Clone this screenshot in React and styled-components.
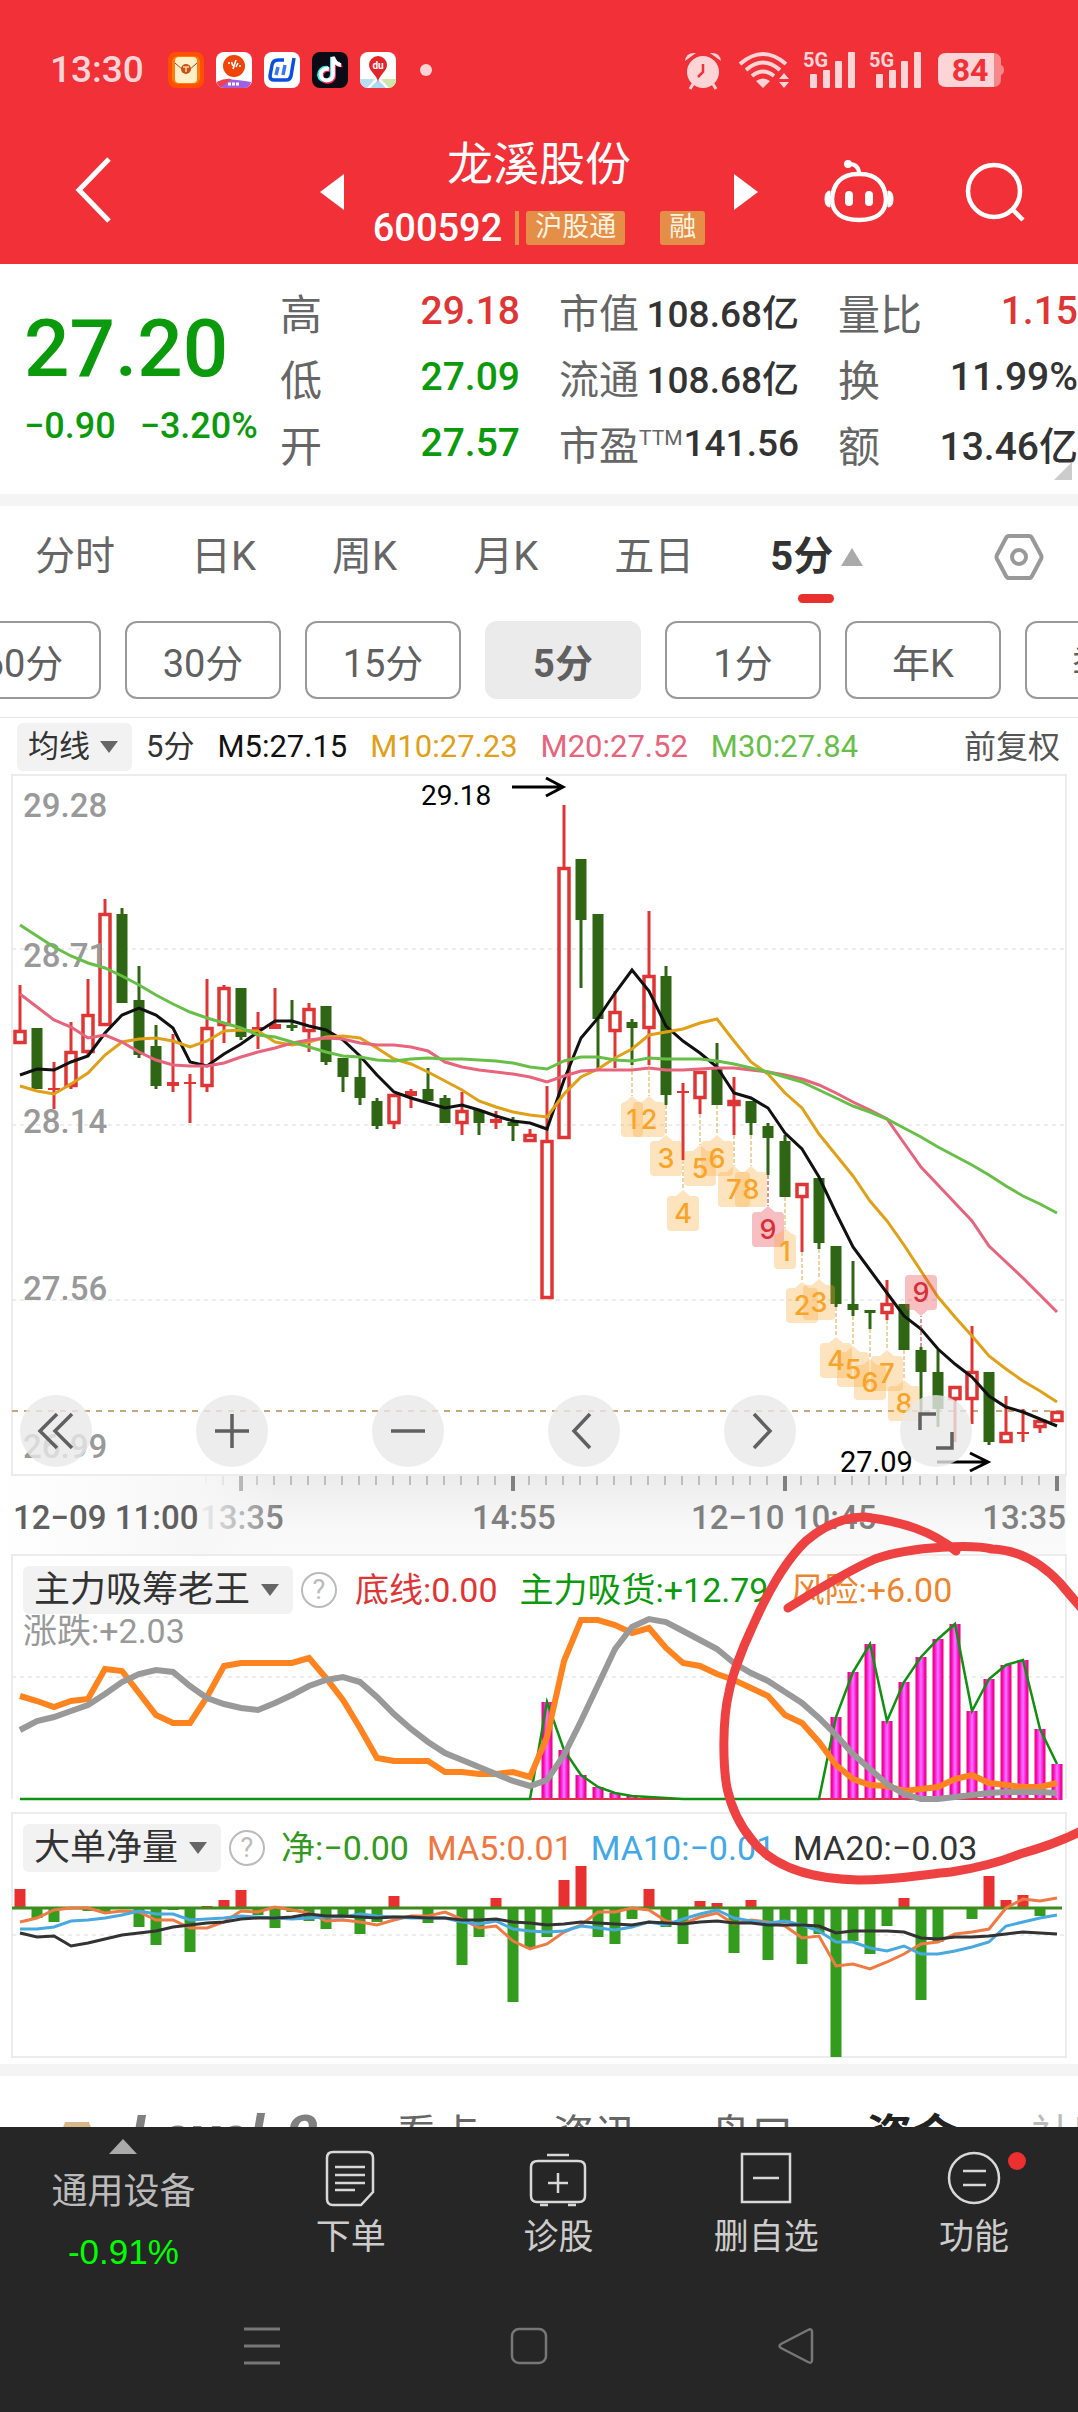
import { useState } from "react";
import styled, { createGlobalStyle } from "styled-components";

const RED = "#e03535";
const GREEN = "#0b9a0b";

// candles: [up, high, bodyTop, bodyBottom, low]
const candles = [
  [1, 215, 260, 274, 274], [0, 258, 258, 319, 319], [1, 292, 318, 320, 339], [1, 252, 281, 317, 319],
  [1, 209, 244, 283, 285], [1, 129, 143, 256, 256], [0, 138, 144, 233, 233], [0, 196, 230, 285, 288],
  [0, 255, 276, 316, 319], [1, 264, 312, 316, 322], [1, 304, 312, 314, 353], [1, 209, 257, 317, 322],
  [1, 215, 217, 256, 273], [0, 218, 218, 267, 270], [1, 242, 257, 260, 279], [1, 218, 254, 259, 259],
  [0, 230, 255, 258, 261], [1, 233, 238, 262, 282], [0, 236, 236, 292, 295], [0, 288, 288, 307, 322],
  [0, 288, 307, 328, 335], [0, 328, 331, 356, 359], [1, 324, 324, 354, 359], [1, 319, 321, 326, 338],
  [0, 298, 319, 331, 331], [0, 325, 328, 353, 353], [1, 322, 340, 354, 365], [0, 340, 340, 353, 365],
  [1, 341, 349, 353, 359], [0, 347, 352, 356, 371], [1, 359, 364, 372, 372], [1, 316, 370, 529, 529],
  [1, 35, 97, 369, 369], [0, 89, 89, 150, 218], [0, 144, 144, 249, 298], [1, 221, 241, 262, 298],
  [0, 249, 252, 258, 295], [1, 141, 205, 259, 295], [0, 196, 206, 325, 335], [1, 313, 321, 323, 390],
  [1, 301, 301, 329, 344], [0, 273, 299, 335, 335], [1, 307, 330, 336, 365], [0, 331, 331, 353, 365],
  [0, 353, 356, 368, 405], [0, 365, 371, 427, 427], [1, 413, 413, 428, 482], [0, 408, 408, 473, 479],
  [0, 476, 476, 534, 537], [0, 491, 534, 540, 546], [0, 540, 540, 543, 559], [1, 510, 533, 544, 550],
  [0, 534, 534, 580, 580], [0, 577, 580, 602, 643], [0, 580, 602, 639, 657], [1, 616, 616, 630, 672],
  [1, 556, 601, 630, 654], [0, 602, 602, 672, 675], [1, 626, 662, 673, 673], [1, 639, 662, 664, 672],
  [1, 649, 650, 658, 663], [1, 641, 641, 652, 652],
];

const m5 = [305, 299, 300, 292, 286, 263, 245, 238, 245, 258, 292, 296, 284, 274, 262, 251, 251, 256, 260, 270, 286, 305, 322, 328, 333, 338, 335, 340, 346, 351, 353, 359, 310, 268, 248, 223, 200, 221, 256, 271, 283, 297, 323, 328, 338, 363, 379, 407, 443, 477, 500, 523, 546, 559, 579, 594, 607, 626, 637, 642, 649, 656];
const m10 = [316, 321, 324, 314, 303, 285, 272, 269, 268, 271, 277, 271, 261, 260, 261, 272, 275, 272, 267, 266, 268, 278, 289, 294, 302, 311, 320, 331, 337, 342, 345, 347, 324, 307, 299, 288, 279, 265, 262, 259, 253, 249, 271, 292, 304, 323, 338, 364, 385, 406, 431, 451, 475, 501, 527, 547, 566, 586, 599, 611, 621, 632];
const m20 = [224, 237, 250, 257, 268, 265, 272, 282, 290, 295, 296, 296, 293, 287, 282, 278, 273, 270, 268, 269, 273, 275, 275, 277, 281, 292, 297, 300, 302, 304, 307, 312, 306, 301, 300, 300, 300, 298, 300, 300, 299, 298, 298, 300, 302, 305, 309, 315, 323, 332, 340, 349, 373, 397, 415, 433, 451, 476, 492, 508, 525, 542];
const m30 = [155, 166, 177, 186, 193, 198, 206, 215, 225, 234, 242, 248, 253, 258, 265, 267, 272, 277, 282, 286, 287, 290, 291, 289, 288, 289, 289, 290, 291, 293, 297, 299, 291, 287, 287, 290, 291, 288, 289, 289, 289, 291, 294, 298, 302, 307, 312, 320, 328, 336, 342, 349, 358, 367, 377, 386, 395, 405, 416, 426, 434, 443];

// sequence tags: [candle, number, tip y]
const tags = [
  [36, 1, 326], [37, 2, 326], [38, 3, 365], [39, 4, 420], [40, 5, 375], [41, 6, 365], [42, 7, 396],
  [43, 8, 396], [44, 9, 436], [45, 1, 458], [46, 2, 512], [47, 3, 509], [48, 4, 567], [49, 5, 576],
  [50, 6, 589], [51, 7, 580], [52, 8, 610],
];

const risk = [156, 161, 167, 161, 159, 129, 131, 153, 175, 183, 183, 157, 126, 123, 123, 123, 123, 118, 138, 160, 188, 218, 221, 221, 221, 232, 232, 234, 234, 232, 237, 197, 121, 80, 80, 85, 93, 88, 108, 123, 126, 134, 140, 148, 156, 175, 183, 202, 225, 239, 245, 246, 251, 249, 247, 239, 235, 243, 245, 247, 247, 243];
const trend = [190, 181, 177, 171, 165, 154, 142, 134, 130, 132, 146, 158, 164, 168, 170, 163, 155, 146, 140, 137, 142, 157, 174, 189, 202, 213, 220, 227, 234, 241, 246, 240, 215, 181, 145, 109, 87, 79, 82, 91, 100, 109, 123, 133, 141, 152, 163, 178, 195, 214, 229, 244, 254, 259, 259, 257, 255, 253, 252, 252, 252, 253];
const absorb = Array(62).fill(259);
[[31, 162], [32, 210], [33, 235], [34, 247], [35, 253], [36, 256], [37, 257], [38, 258],
  [48, 177], [49, 132], [50, 104], [51, 181], [52, 142], [53, 117], [54, 99], [55, 84], [56, 171],
  [57, 139], [58, 125], [59, 120], [60, 189], [61, 224]].forEach(([i, y]) => { absorb[i] = y; });

const net = [19, -10, -14, 0, -3, -4, 0, -19, -37, -2, -44, 2, 8, 18, -7, -20, -4, -13, -21, -8, -26, -14, 12, 0, -15, 0, -57, -29, 10, -94, -40, -29, 28, 42, -29, -36, -11, 19, -19, -36, 7, 5, -45, 8, -52, -15, -56, -26, -149, -33, -46, -18, 10, -92, -34, 0, -11, 32, 8, 13, -8, 0];
const net5 = [14, 10, 2, 0, 0, 5, 3, 4, 12, 12, 20, 20, 14, 3, 4, -1, 2, 5, 13, 12, 14, 17, 12, 8, 8, 4, 11, 20, 18, 33, 41, 36, 24, 17, 4, 4, 0, 2, 13, 16, 9, 5, 16, 12, 14, 18, 30, 28, 58, 56, 61, 54, 46, 36, 34, 26, 24, 21, 0, -9, -7, -10];
const net10 = [21, 21, 19, 13, 12, 10, 7, 3, 6, 6, 12, 11, 10, 8, 9, 10, 11, 10, 9, 9, 6, 8, 9, 10, 10, 10, 14, 16, 13, 21, 23, 24, 23, 18, 20, 22, 19, 14, 17, 11, 6, 2, 10, 13, 15, 13, 17, 23, 34, 34, 40, 43, 38, 46, 46, 43, 39, 34, 18, 14, 10, 7];
const net20 = [25, 29, 28, 38, 35, 31, 27, 25, 23, 19, 17, 15, 14, 11, 10, 10, 9, 6, 8, 8, 9, 10, 9, 9, 10, 10, 12, 12, 11, 14, 15, 17, 16, 14, 15, 16, 17, 14, 15, 16, 14, 13, 15, 15, 17, 17, 17, 18, 25, 23, 23, 23, 24, 30, 31, 29, 29, 28, 26, 24, 25, 26];

const xAt = (i) => 20 + i * 17;
const toPoints = (ys, base = 0) => ys.map((y, i) => `${xAt(i)},${y + base}`).join(" ");

const GlobalStyle = createGlobalStyle`
  * { box-sizing: border-box; }
  body {
    margin: 0;
    background: #fff;
    color: #333;
    font-family: Roboto, "Noto Sans CJK SC", sans-serif;
  }
  button, select {
    margin: 0;
    padding: 0;
    border: 0;
    background: none;
    color: inherit;
    font: inherit;
    line-height: inherit;
  }
  svg { display: block; flex: none; }
`;

const Page = styled.div`
  display: flex;
  flex-direction: column;
  height: 100vh;
  overflow: hidden;
`;

const Content = styled.main`
  flex: 1;
  min-height: 0;
  overflow: hidden;
`;

const TopArea = styled.header`
  background: #f23037;
  color: #fff;
`;

const StatusBar = styled.div`
  display: flex;
  align-items: center;
  height: 120px;
  padding: 20px 74px 0 50px;
  color: #fdd5d7;
`;

const Clock = styled.span`
  flex: none;
  width: 118px;
  font-size: 37px;
  font-weight: 500;
  line-height: 40px;
`;

const AppIcons = styled.div`
  display: flex;
  align-items: center;
  gap: 12px;
  margin-right: auto;
`;

const Dot = styled.i`
  width: 12px;
  height: 12px;
  margin-left: 12px;
  border-radius: 50%;
  background: #fdd5d7;
`;

const StatusIcons = styled.div`
  display: flex;
  align-items: center;
  gap: 16px;
`;

const TitleBar = styled.div`
  display: grid;
  grid-template-columns: 1fr 24px auto 24px 1fr;
  align-items: center;
  height: 144px;
`;

const BackButton = styled.button`
  justify-self: start;
  padding: 0 0 4px 75px;
`;

const StockTitle = styled.div`
  display: flex;
  flex-direction: column;
  align-items: center;
  gap: 16px;
  width: 390px;
`;

const StockName = styled.h1`
  margin: 0;
  font-size: 46px;
  font-weight: 400;
  line-height: 56px;
`;

const StockCode = styled.div`
  display: flex;
  align-items: center;
  font-size: 38px;
  font-weight: 500;
  line-height: 40px;
`;

const Badge = styled.span`
  height: 34px;
  margin-left: ${(p) => p.$gap}px;
  padding: 0 9px;
  border-radius: 3px;
  background: #e58e48;
  color: #fff3e0;
  font-size: 27px;
  font-weight: 400;
  line-height: 33px;
`;

const BadgeEdge = styled.i`
  width: 4px;
  height: 34px;
  margin-left: 13px;
  background: #e58e48;
`;

const TitleActions = styled.div`
  display: flex;
  align-items: center;
  justify-content: space-between;
  padding: 0 53px 0 66px;
`;

const Quote = styled.section`
  display: flex;
  position: relative;
  padding: 14px 0 18px 24px;
`;

const PriceBlock = styled.div`
  flex: none;
  width: 256px;
  color: ${GREEN};
`;

const Price = styled.div`
  padding-top: 22px;
  font-size: 80px;
  font-weight: 500;
  line-height: 98px;
`;

const Change = styled.div`
  display: flex;
  gap: 24px;
  font-size: 36px;
  font-weight: 500;
  line-height: 56px;
  white-space: nowrap;
`;

const QuoteGrid = styled.dl`
  display: grid;
  flex: 1;
  grid-template-columns: repeat(3, minmax(0, 1fr));
  column-gap: 39px;
  margin: 0;
`;

const QuoteItem = styled.div`
  display: flex;
  align-items: center;
  justify-content: space-between;
  height: 66px;
  white-space: nowrap;
  dt {
    color: #666;
    font-size: ${(p) => (p.$compact ? 40 : 42)}px;
  }
  sup {
    font-size: 21px;
    line-height: 21px;
    vertical-align: 15px;
  }
  dd {
    margin: 0;
    color: ${(p) => p.$color || "#333"};
    font-size: ${(p) => (p.$compact ? 37 : 39)}px;
    font-weight: 500;
  }
`;

const Corner = styled.svg`
  position: absolute;
  right: 6px;
  bottom: 14px;
`;

const Band = styled.div`
  height: 12px;
  background: #f4f4f4;
`;

const Tabs = styled.nav`
  display: flex;
  align-items: center;
  gap: 76px;
  height: 115px;
  padding: 0 34px 14px 35px;
`;

const Tab = styled.button`
  position: relative;
  display: flex;
  align-items: center;
  gap: 8px;
  color: ${(p) => (p.$active ? "#333" : "#666")};
  font-size: 40px;
  font-weight: ${(p) => (p.$active ? 700 : 400)};
  line-height: 60px;
  white-space: nowrap;
  &::after {
    content: "";
    display: ${(p) => (p.$active ? "block" : "none")};
    position: absolute;
    left: 28px;
    bottom: -16px;
    width: 36px;
    height: 9px;
    border-radius: 5px;
    background: #e8302f;
  }
`;

const SettingsButton = styled.button`
  margin-left: auto;
`;

const Periods = styled.div`
  display: flex;
  gap: 24px;
  padding-bottom: 18px;
  border-bottom: 1px solid #e6e6e6;
  overflow: hidden;
`;

const Period = styled.button`
  flex: none;
  width: 156px;
  height: 78px;
  border: 2px solid ${(p) => (p.$active ? "#ebebeb" : "#999")};
  border-radius: 12px;
  background: ${(p) => (p.$active ? "#ebebeb" : "#fff")};
  color: #606060;
  font-size: 38px;
  font-weight: ${(p) => (p.$active ? 700 : 400)};
  &:first-child {
    margin-left: -55px;
  }
`;

const Legend = styled.div`
  display: flex;
  align-items: center;
  gap: 23px;
  height: 52px;
  padding: 6px 18px 0 17px;
  font-size: 31px;
  line-height: 46px;
  white-space: nowrap;
  label {
    margin-right: -9px;
  }
`;

const LegendValue = styled.span`
  color: ${(p) => p.$color};
`;

const Adjust = styled.button`
  margin-left: auto;
  color: #555;
  font-size: 32px;
`;

const PickerBox = styled.label`
  display: flex;
  align-items: center;
  gap: 10px;
  height: 48px;
  padding: 0 14px 0 11px;
  border-radius: 6px;
  background: #f2f2f2;
  color: #333;
  select {
    appearance: none;
  }
`;

const Chart = styled.svg`
  width: 100%;
  height: auto;
`;

const PriceChart = styled.section`
  position: relative;
`;

const Controls = styled.div`
  position: absolute;
  left: 20px;
  right: 106px;
  bottom: 9px;
  display: flex;
  justify-content: space-between;
`;

const RoundButton = styled.button`
  display: flex;
  align-items: center;
  justify-content: center;
  width: 72px;
  height: 72px;
  border-radius: 50%;
  background: rgba(232, 232, 232, 0.8);
`;

const Studies = styled.section`
  position: relative;
`;

const Study = styled.div`
  display: grid;
  > * {
    grid-area: 1 / 1;
  }
`;

const StudyHead = styled.div`
  z-index: 1;
  align-self: start;
  padding: 12px 23px 0;
  font-size: 34px;
  line-height: 48px;
  white-space: nowrap;
`;

const StudyRow = styled.div`
  display: flex;
  align-items: center;
  gap: ${(p) => p.$gap}px;
  select {
    font-size: 36px;
  }
`;

const StudyNote = styled.div`
  color: #999;
  line-height: 34px;
`;

const HelpButton = styled.button`
  width: 36px;
  height: 36px;
  margin: 0 ${(p) => p.$after}px 0 ${(p) => p.$before}px;
  border: 2px solid #bbb;
  border-radius: 50%;
  color: #bbb;
  font-size: 27px;
  line-height: 30px;
`;

const Ink = styled.svg`
  position: absolute;
  inset: 0;
  z-index: 2;
  width: 100%;
  height: 100%;
  pointer-events: none;
`;

const SectionTabs = styled.nav`
  display: flex;
  align-items: center;
  gap: 73px;
  padding: 28px 0 28px 60px;
  overflow: hidden;
`;

const LevelTab = styled.button`
  display: flex;
  flex: none;
  align-items: center;
  gap: 36px;
  margin-right: 4px;
  color: #808080;
  font-size: 58px;
  font-style: italic;
  font-weight: 700;
  line-height: 64px;
  white-space: nowrap;
`;

const SectionTab = styled.button`
  flex: none;
  color: ${(p) => (p.$active ? "#222" : p.$faded ? "#bbb" : "#666")};
  font-size: ${(p) => (p.$active ? 46 : 42)}px;
  font-weight: ${(p) => (p.$active ? 700 : 400)};
  line-height: 64px;
`;

const Bottom = styled.footer`
  flex: none;
  background: #262626;
  color: #ccc;
`;

const Toolbar = styled.div`
  display: grid;
  grid-template-columns: 247fr repeat(4, 208fr);
  height: 160px;
`;

const IndexButton = styled.button`
  display: flex;
  flex-direction: column;
  align-items: center;
  padding-top: 12px;
  color: #bbb;
  font-size: 36px;
  line-height: 60px;
  span {
    margin-top: 8px;
  }
  strong {
    color: #0f0;
    font-family: "Liberation Sans", sans-serif;
    font-size: 35px;
    font-weight: 400;
  }
`;

const Tool = styled.button`
  display: flex;
  flex-direction: column;
  align-items: center;
  gap: 6px;
  padding-top: 23px;
  font-size: 35px;
  line-height: 48px;
`;

const SystemNav = styled.div`
  display: flex;
  justify-content: space-between;
  padding: 40px 263px 47px 243px;
`;

const Triangle = ({ down = false, width = 18, height = 12, color = "#666" }) => (
  <svg width={width} height={height} viewBox="0 0 18 12" preserveAspectRatio="none" aria-hidden="true">
    <path d={down ? "M0 0H18L9 12Z" : "M0 12H18L9 0Z"} fill={color} />
  </svg>
);

const Picker = ({ label, value }) => (
  <PickerBox>
    <select aria-label={label}>
      <option>{value}</option>
    </select>
    <Triangle down />
  </PickerBox>
);

const Signal = () => (
  <svg width="50" height="40" viewBox="0 0 50 40" overflow="visible" fill="#fdd5d7" aria-hidden="true">
    <text x="-2" y="17" fontSize="20" fontWeight="700">5G</text>
    <rect x="5" y="24" width="7" height="14" rx="1" />
    <rect x="18" y="20" width="7" height="18" rx="1" />
    <rect x="30" y="11" width="7" height="27" rx="1" />
    <rect x="43" y="2" width="7" height="36" rx="1" />
  </svg>
);

const Apps = () => (
  <AppIcons>
    <svg width="36" height="36" viewBox="0 0 36 36">
      <rect width="36" height="36" rx="8" fill="#ff5000" />
      <rect x="4" y="4" width="28" height="28" rx="6" fill="#ff7a10" />
      <rect x="7" y="5" width="22" height="26" rx="4" fill="#fff0c8" />
      <path d="M7 11Q18 24 29 11" fill="none" stroke="#b0401a" />
      <circle cx="18" cy="17" r="5" fill="#c8501a" />
      <path d="M15 15H21M18 15V20" stroke="#ffd890" strokeWidth="1.5" />
    </svg>
    <svg width="36" height="36" viewBox="0 0 36 36">
      <rect width="36" height="36" rx="8" fill="#fff" />
      <circle cx="18" cy="14" r="11" fill="#f04408" />
      <path d="M13 10V12M15.500 10L17 14M20 8L17 17M22 11L20 15M24 13V15" stroke="#fff" strokeWidth="1.6" />
      <path d="M1 30Q10 25 35 30Q34 36 28 36H8Q2 36 1 30Z" fill="#a060e0" />
      <path d="M1 30Q8 26 16 27L5 35Q1 33 1 30Z" fill="#f04050" />
      <path d="M12 32H24" stroke="#fff" strokeWidth="3" strokeDasharray="3 1" />
    </svg>
    <svg width="36" height="36" viewBox="0 0 36 36">
      <rect width="36" height="36" rx="8" fill="#fff" />
      <path d="M20 8H14Q9 8 8 13L6 24Q6 28 10 28H22Q26 28 27 24L30 6" fill="none" stroke="#0a50e0" strokeWidth="3.500" />
      <path d="M14 15L12 23M21 13L19 23" stroke="#3a78f0" strokeWidth="3.500" />
    </svg>
    <svg width="36" height="36" viewBox="0 0 36 36">
      <rect width="36" height="36" rx="8" fill="#0c0a14" />
      <g fill="none" strokeWidth="4">
        <path d="M16 16C10 15 7 19 7 23C8 31 20 30 20 22V5C21 10 25 12 28 12" stroke="#25f4ee" />
        <path d="M18 18C12 17 9 21 10 25C11 32 22 31 22 24V7C23 11 27 14 30 13" stroke="#fe2c55" />
        <path d="M17 17C11 16 8 20 9 24C10 30 21 30 21 23V5C22 10 26 13 29 13" stroke="#fff" />
      </g>
    </svg>
    <svg width="36" height="36" viewBox="0 0 36 36">
      <rect width="36" height="36" rx="8" fill="#fff" />
      <path d="M0 27H15L7 36Q0 35 0 27Z" fill="#b8dcf4" />
      <path d="M21 27H36Q36 35 29 36Z" fill="#cfe6a8" />
      <path d="M18 28L26 36H10Z" fill="#a8d8f4" />
      <path d="M18 30C17 23 9 19 9 13A9 9 0 0 1 27 13C27 19 19 23 18 30Z" fill="#e32428" />
      <text x="18" y="17" fontSize="10" fontWeight="700" fill="#fff" textAnchor="middle">du</text>
    </svg>
    <Dot />
  </AppIcons>
);

const StatusRight = () => (
  <StatusIcons>
    <svg width="38" height="40" viewBox="0 0 38 40">
      <path d="M1 11Q2 2 12 3ZM37 11Q36 2 26 3Z" fill="#fdd5d7" />
      <circle cx="19" cy="22" r="16" fill="#fdd5d7" />
      <path d="M9 34L6 39M29 34L32 39" stroke="#fdd5d7" strokeWidth="3" />
      <path d="M19 14V22L14 27" fill="none" stroke="#f23037" strokeWidth="2.500" />
    </svg>
    <svg width="51" height="40" viewBox="0 0 51 40">
      <g fill="none" stroke="#fdd5d7" strokeWidth="4">
        <path d="M2 14Q25 -6 48 14" />
        <path d="M8 20Q25 5 42 20" />
        <path d="M14 26Q25 17 36 26" />
      </g>
      <path d="M18 31Q25 26 32 31L25 38ZM41 29L46 23L51 29ZM41 32L46 38L51 32Z" fill="#fdd5d7" />
    </svg>
    <Signal />
    <Signal />
    <svg width="67" height="36" viewBox="0 0 67 36">
      <path d="M56 1Q64 1 64 9V13Q67 14 67 18T64 23V27Q64 35 56 35Z" fill="#f8878b" />
      <path d="M9 1H57V35H9Q1 35 1 27V9Q1 1 9 1Z" fill="#fdd5d7" />
      <text x="33" y="29" fontSize="32" fontWeight="700" fill="#f23037" textAnchor="middle">84</text>
    </svg>
  </StatusIcons>
);

const Header = () => (
  <TopArea>
    <StatusBar>
      <Clock>13:30</Clock>
      <Apps />
      <StatusRight />
    </StatusBar>
    <TitleBar>
      <BackButton aria-label="返回">
        <svg width="38" height="66" viewBox="0 0 38 66">
          <path d="M34 2L4 33L34 64" fill="none" stroke="#fff" strokeWidth="5" />
        </svg>
      </BackButton>
      <button aria-label="上一只">
        <svg width="24" height="36" viewBox="0 0 24 36"><path d="M24 0V36L0 18Z" fill="#fff" /></svg>
      </button>
      <StockTitle>
        <StockName>龙溪股份</StockName>
        <StockCode>
          600592
          <BadgeEdge />
          <Badge $gap={7}>沪股通</Badge>
          <Badge $gap={35}>融</Badge>
        </StockCode>
      </StockTitle>
      <button aria-label="下一只">
        <svg width="24" height="36" viewBox="0 0 24 36"><path d="M0 0V36L24 18Z" fill="#fff" /></svg>
      </button>
      <TitleActions>
        <button aria-label="智能助手">
          <svg width="70" height="66" viewBox="0 0 70 66" fill="none" stroke="#fff">
            <path d="M36 15H34C16 15 9 26 8 40C8 54 18 61 35 61S62 54 62 40C61 26 54 15 36 15Z" strokeWidth="4.500" />
            <path d="M35 15Q35 5 25 5" strokeWidth="4" />
            <circle cx="24" cy="5" r="4" fill="#fff" stroke="none" />
            <path d="M6 32Q1 32 1 40T6 48ZM64 32Q69 32 69 40T64 48Z" fill="#fff" strokeWidth="1" />
            <path d="M25 36V43M45 36V43" strokeWidth="8" strokeLinecap="round" />
          </svg>
        </button>
        <button aria-label="搜索">
          <svg width="60" height="60" viewBox="0 0 60 60" fill="none" stroke="#fff" strokeWidth="4.500">
            <circle cx="29" cy="29" r="26" />
            <path d="M47 47L58 58" />
          </svg>
        </button>
      </TitleActions>
    </TitleBar>
  </TopArea>
);

const quotes = [
  { name: "高", value: "29.18", color: RED },
  { name: "市值", value: "108.68亿", compact: true },
  { name: "量比", value: "1.15", color: RED },
  { name: "低", value: "27.09", color: GREEN },
  { name: "流通", value: "108.68亿", compact: true },
  { name: "换", value: "11.99%" },
  { name: "开", value: "27.57", color: GREEN },
  { name: "市盈", sup: "TTM", value: "141.56", compact: true },
  { name: "额", value: "13.46亿" },
];

const QuotePanel = () => (
  <Quote>
    <PriceBlock>
      <Price>27.20</Price>
      <Change>
        <span>−0.90</span>
        <span>−3.20%</span>
      </Change>
    </PriceBlock>
    <QuoteGrid>
      {quotes.map((q) => (
        <QuoteItem key={q.name} $color={q.color} $compact={q.compact}>
          <dt>{q.name}{q.sup && <sup>{q.sup}</sup>}</dt>
          <dd>{q.value}</dd>
        </QuoteItem>
      ))}
    </QuoteGrid>
    <Corner width="18" height="18" viewBox="0 0 18 18"><path d="M18 0V18H0Z" fill="#ccc" /></Corner>
  </Quote>
);

const Candle = ({ i, data: [up, high, top, bottom, low] }) => {
  const x = xAt(i);
  if (!up) {
    return (
      <g fill="#2f6614">
        <rect x={x - 1.5} y={high} width="3" height={low - high} />
        <rect x={x - 5.5} y={top} width="11" height={bottom - top} />
      </g>
    );
  }
  const solid = bottom - top < 6;
  return (
    <g fill={RED}>
      <rect x={x - 1.5} y={high} width="3" height={top - high} />
      <rect x={x - 1.5} y={bottom} width="3" height={low - bottom} />
      {solid ? (
        <rect x={x - 6} y={top} width="12" height={bottom - top} />
      ) : (
        <rect x={x - 5} y={top + 1.5} width="10" height={bottom - top - 3} fill="none" stroke={RED} strokeWidth="3.500" />
      )}
    </g>
  );
};

const Tag = ({ i, n, tip, flip }) => {
  const x = xAt(i);
  const w = n === 1 ? 11 : 16;
  const hot = n === 9;
  const color = hot ? "#d8303a" : "#f7a428";
  const d = flip ? -1 : 1;
  const shape = `M${x} ${tip}L${x + 7} ${tip + 6 * d}H${x + w - 4}Q${x + w} ${tip + 6 * d} ${x + w} ${tip + 10 * d}V${tip + 37 * d}Q${x + w} ${tip + 41 * d} ${x + w - 4} ${tip + 41 * d}H${x - w + 4}Q${x - w} ${tip + 41 * d} ${x - w} ${tip + 37 * d}V${tip + 10 * d}Q${x - w} ${tip + 6 * d} ${x - w + 4} ${tip + 6 * d}H${x - 7}Z`;
  return (
    <g>
      <path d={`M${x} ${flip ? 577 : candles[i][4]}V${tip}`} stroke={hot ? "#b03040" : "#dca848"} strokeDasharray="4 2" />
      <path d={shape} fill={hot ? "#e84850" : "#fba838"} fillOpacity={hot ? 0.35 : 0.32} />
      <text x={x} y={flip ? tip - 14 : tip + 33} fontSize="27" fontFamily="Inter, sans-serif" fontWeight="500" fill={color} textAnchor="middle">{n}</text>
    </g>
  );
};

const KLine = () => (
  <PriceChart>
    <Chart viewBox="0 0 1078 706" role="img" aria-label="5分K线">
      <rect x="12" y="5" width="1054" height="700" fill="none" stroke="#ececec" strokeWidth="2" />
      <path d="M12 179H1066M12 355H1066M12 530H1066" stroke="#dcdcdc" strokeDasharray="4 4" />
      <path d="M12 641H1066" stroke="#c4a87c" strokeWidth="2" strokeDasharray="6 6" />
      {candles.map((c, i) => <Candle key={i} i={i} data={c} />)}
      <g fontSize="33" fontWeight="500" fill="#999">
        <text x="23" y="47">29.28</text>
        <text x="23" y="197">28.71</text>
        <text x="23" y="363">28.14</text>
        <text x="23" y="530">27.56</text>
        <text x="23" y="688">26.99</text>
      </g>
      <g fill="none" strokeWidth="3">
        <polyline points={toPoints(m5)} stroke="#111" />
        <polyline points={toPoints(m10)} stroke="#e0a018" />
        <polyline points={toPoints(m20)} stroke="#e8637c" />
        <polyline points={toPoints(m30)} stroke="#68bf48" />
      </g>
      {tags.map(([i, n, tip]) => <Tag key={i} i={i} n={n} tip={tip} />)}
      <Tag i={53} n={9} tip={546} flip />
      <g fontSize="28" fill="#000">
        <text x="421" y="35">29.18</text>
        <text x="840" y="702" fontSize="29">27.09</text>
      </g>
      <g fill="none" stroke="#000" strokeWidth="3">
        <path d="M512 17H563M546 8L563 17L546 26" />
        <path d="M937 692H988M970 683L988 692L970 701" />
      </g>
    </Chart>
    <Controls>
      {[
        ["更多", "M37 19L20 36L37 53M52 19L35 36L52 53"],
        ["放大", "M36 19V53M19 36H53"],
        ["缩小", "M19 36H53"],
        ["左移", "M42 19L26 36L42 53"],
        ["右移", "M30 19L46 36L30 53"],
        ["全屏", "M20 35V19H36M52 37V53H36"],
      ].map(([name, d]) => (
        <RoundButton key={name} aria-label={name}>
          <svg width="72" height="72" viewBox="0 0 72 72">
            <path d={d} fill="none" stroke="#606060" strokeWidth="3.500" />
          </svg>
        </RoundButton>
      ))}
    </Controls>
  </PriceChart>
);

const TimeAxis = () => (
  <Chart viewBox="0 0 1078 78" role="img" aria-label="时间轴">
    <defs>
      <linearGradient id="axisShade" x1="0" y1="0" x2="0" y2="1">
        <stop offset="0" stopColor="#ececec" />
        <stop offset="0.7" stopColor="#f9f9f9" />
        <stop offset="1" stopColor="#fafafa" />
      </linearGradient>
      <linearGradient id="axisFade" x1="0" y1="0" x2="1" y2="0">
        <stop offset="0" stopColor="#fff" />
        <stop offset="0.7" stopColor="#f7f7f7" />
        <stop offset="1" stopColor="#f7f7f7" stopOpacity="0" />
      </linearGradient>
    </defs>
    <rect width="1066" height="78" fill="url(#axisShade)" />
    {Array.from({ length: 51 }, (_, k) => k + 11).map((i) => {
      const major = (i - 13) % 16 === 0;
      return (
        <rect key={i} x={xAt(i) - 2} y="0" width={major ? 4 : 2} height={major ? 15 : 9} fill={major ? "#808080" : "#bdbdbd"} />
      );
    })}
    <g fontSize="33" fontWeight="500" fill="#808080">
      <text x="200" y="53">13:35</text>
      <text x="472" y="53">14:55</text>
      <text x="691" y="53">12−10 10:45</text>
      <text x="1066" y="53" textAnchor="end">13:35</text>
      <rect width="280" height="78" fill="url(#axisFade)" />
      <text x="13" y="53" fill="#606060">12−09 11:00</text>
    </g>
  </Chart>
);

const AbsorbStudy = () => (
  <Study>
    <Chart viewBox="0 14 1078 258" role="img" aria-label="主力吸筹老王">
      <defs>
        <linearGradient id="barFill" x1="0" y1="0" x2="1" y2="0">
          <stop offset="0" stopColor="#e80850" />
          <stop offset="0.2" stopColor="#f808c8" />
          <stop offset="0.5" stopColor="#ff78ff" />
          <stop offset="0.8" stopColor="#f808c8" />
          <stop offset="1" stopColor="#e80850" />
        </linearGradient>
      </defs>
      <path d="M12 259V15H1066V259" fill="none" stroke="#ececec" strokeWidth="2" />
      <path d="M12 137H1066" stroke="#dcdcdc" strokeDasharray="4 4" />
      {absorb.map((y, i) => y < 258 && (
        <rect key={i} x={xAt(i) - 5.5} y={y} width="11" height={260 - y} fill="url(#barFill)" />
      ))}
      <path d="M530 259H1057" stroke="#e03048" strokeWidth="2" />
      <g fill="none">
        <polyline points={toPoints(absorb)} stroke="#109010" strokeWidth="2.500" />
        <polyline points={toPoints(risk)} stroke="#ff8420" strokeWidth="6" />
        <polyline points={toPoints(trend)} stroke="#999" strokeWidth="6" />
      </g>
    </Chart>
    <StudyHead>
      <StudyRow $gap={22}>
        <Picker label="指标" value="主力吸筹老王" />
        <HelpButton aria-label="指标说明" $before={-14} $after={-4}>?</HelpButton>
        <LegendValue $color={RED}>底线:0.00</LegendValue>
        <LegendValue $color={GREEN}>主力吸货:+12.79</LegendValue>
        <LegendValue $color="#ee842c">风险:+6.00</LegendValue>
      </StudyRow>
      <StudyNote>涨跌:+2.03</StudyNote>
    </StudyHead>
  </Study>
);

const NetStudy = () => (
  <Study>
    <Chart viewBox="0 0 1078 252" role="img" aria-label="大单净量">
      <rect x="12" y="1" width="1054" height="244" fill="none" stroke="#ececec" strokeWidth="2" />
      <path d="M12 123H1066" stroke="#dcdcdc" strokeDasharray="4 4" />
      {net.map((v, i) => (
        <rect key={i} x={xAt(i) - 5.5} y={v > 0 ? 96 - v : 96} width="11" height={Math.abs(v)} fill={v > 0 ? "#e83030" : "#339c1e"} />
      ))}
      <path d="M12 96H1062" stroke="#3c8c1c" strokeWidth="3" />
      <g fill="none" strokeWidth="3">
        <polyline points={toPoints(net5, 96)} stroke="#f07a44" />
        <polyline points={toPoints(net10, 96)} stroke="#48a8e0" />
        <polyline points={toPoints(net20, 96)} stroke="#333" />
      </g>
    </Chart>
    <StudyHead>
      <StudyRow $gap={18}>
        <Picker label="指标" value="大单净量" />
        <HelpButton aria-label="指标说明" $before={-10} $after={-2}>?</HelpButton>
        <LegendValue $color="#339920">净:−0.00</LegendValue>
        <LegendValue $color="#f07840">MA5:0.01</LegendValue>
        <LegendValue $color="#42a8e8">MA10:−0.01</LegendValue>
        <LegendValue $color="#333">MA20:−0.03</LegendValue>
      </StudyRow>
    </StudyHead>
  </Study>
);

// hand drawn circle round the latest bars
const Marker = () => (
  <Ink viewBox="0 0 1078 588" preserveAspectRatio="none" aria-hidden="true">
    <g fill="none" stroke="#ee4242" strokeWidth="9" strokeLinecap="round" strokeLinejoin="round">
      <path d="M956 75C932 55 903 46 865 41C840 41 820 53 806 65C785 85 768 115 751 154C742 173 732 200 729 216C722 245 723 290 727 312C732 335 742 352 752 364C775 394 815 403 858 404C900 404 925 398 951 396C985 391 1005 384 1020 378C1045 371 1065 364 1085 353" />
      <path d="M788 132C820 112 850 94 875 83C915 69 975 69 992 73C1022 74 1045 91 1060 107C1070 119 1076 126 1085 136" />
    </g>
  </Ink>
);

const tools = [
  ["下单", <path key="a" d="M8 2H42Q48 2 48 8V42L36 55H8Q2 55 2 49V8Q2 2 8 2ZM10 17H40M10 25H40M10 33H40M10 40H30" />],
  ["诊股", <path key="b" d="M6 11H46Q53 11 53 17V46Q53 52 47 52H5Q-1 52 -1 46V17Q-1 11 6 11ZM15 5H37M26 23V43M16 33H36M8 55H16M36 55H44" />],
  ["删自选", <path key="c" d="M2 4H50V52H2ZM13 28H39" />],
  ["功能", <g key="d"><circle cx="26" cy="28" r="25" /><path d="M15 21H38M15 35H38" /><circle cx="69" cy="11" r="9" fill="#ec3030" stroke="none" /></g>],
];

const tabNames = ["分时", "日K", "周K", "月K", "五日", "5分"];
const periodNames = ["60分", "30分", "15分", "5分", "1分", "年K", "季K"];

const App = () => {
  const [tab, setTab] = useState("5分");
  const [period, setPeriod] = useState("5分");

  return (
    <Page>
      <GlobalStyle />
      <Content>
        <Header />
        <QuotePanel />
        <Band />
        <Tabs>
          {tabNames.map((name) => (
            <Tab key={name} $active={tab === name} onClick={() => setTab(name)}>
              {name}
              {name === "5分" && <Triangle width={22} height={18} color="#aaa" />}
            </Tab>
          ))}
          <SettingsButton aria-label="设置">
            <svg width="50" height="48" viewBox="0 0 50 48" fill="none" stroke="#999" strokeWidth="4">
              <path d="M15 3H35Q37 3 38 5L47 22Q48 24 47 26L38 43Q37 45 35 45H15Q13 45 12 43L3 26Q2 24 3 22L12 5Q13 3 15 3Z" />
              <circle cx="25" cy="24" r="7" />
            </svg>
          </SettingsButton>
        </Tabs>
        <Periods>
          {periodNames.map((name) => (
            <Period key={name} $active={period === name} onClick={() => setPeriod(name)}>{name}</Period>
          ))}
        </Periods>
        <Legend>
          <Picker label="主图指标" value="均线" />
          <span>5分</span>
          <LegendValue $color="#111">M5:27.15</LegendValue>
          <LegendValue $color="#e0a018">M10:27.23</LegendValue>
          <LegendValue $color="#e8637c">M20:27.52</LegendValue>
          <LegendValue $color="#68bf48">M30:27.84</LegendValue>
          <Adjust>前复权</Adjust>
        </Legend>
        <KLine />
        <Studies>
          <TimeAxis />
          <AbsorbStudy />
          <NetStudy />
          <Marker />
        </Studies>
        <Band />
        <SectionTabs>
          <LevelTab>
            <svg width="34" height="28" viewBox="0 0 34 28"><path d="M5 0H29L34 14L29 28H5L0 14Z" fill="#d8b888" /></svg>
            Level-2
          </LevelTab>
          <SectionTab>看点</SectionTab>
          <SectionTab>资讯</SectionTab>
          <SectionTab>盘口</SectionTab>
          <SectionTab $active>资金</SectionTab>
          <SectionTab $faded>社区</SectionTab>
        </SectionTabs>
      </Content>
      <Bottom>
        <Toolbar>
          <IndexButton>
            <Triangle width={28} height={15} color="#aaa" />
            <span>通用设备</span>
            <strong>-0.91%</strong>
          </IndexButton>
          {tools.map(([name, icon]) => (
            <Tool key={name}>
              <svg width="52" height="58" viewBox="0 0 52 58" overflow="visible" fill="none" stroke="#d8d8d8" strokeWidth="2.500">
                {icon}
              </svg>
              {name}
            </Tool>
          ))}
        </Toolbar>
        <SystemNav>
          <button aria-label="最近任务">
            <svg width="38" height="38" viewBox="0 0 38 38"><path d="M1 2H37M1 19H37M1 36H37" stroke="#777" strokeWidth="3" /></svg>
          </button>
          <button aria-label="主屏幕">
            <svg width="38" height="38" viewBox="0 0 38 38"><rect x="2" y="2" width="34" height="34" rx="7" fill="none" stroke="#777" strokeWidth="2.500" /></svg>
          </button>
          <button aria-label="后退">
            <svg width="38" height="38" viewBox="0 0 38 38"><path d="M31 3Q35 1 35 5V33Q35 37 31 35L4 21Q1 19 4 17Z" fill="none" stroke="#777" strokeWidth="2.500" /></svg>
          </button>
        </SystemNav>
      </Bottom>
    </Page>
  );
};

export default App;
